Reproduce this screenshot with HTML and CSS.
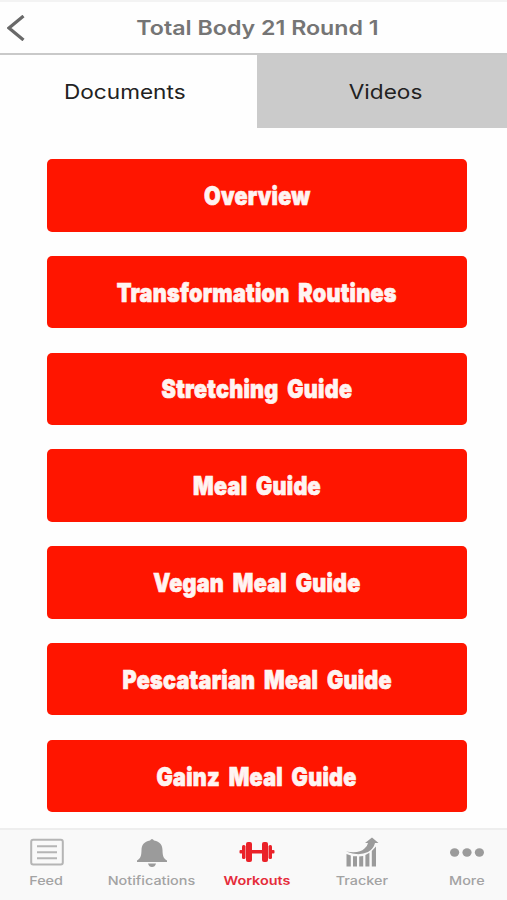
FILE: index.html
```html
<!DOCTYPE html>
<html lang="en">

<head>
    <meta charset="UTF-8">
    <meta name="viewport" content="width=device-width, initial-scale=1.0">
    <title>Total Body 21 Round 1</title>
    <link rel="stylesheet" href="styles.css">
</head>
<body>
    <!-- Header -->
    <header class="header">
        <a class="back" href="#" aria-label="Back">
            <svg width="18" height="26" viewBox="0 0 18 26"><path d="M16.500 1L2 13L16.500 25" /></svg>
        </a>
        <h1 class="title"><span>Total Body 21 Round 1</span></h1>
    </header>

    <!-- Tabs -->
    <div class="tabs">
        <a class="tab active" href="#"><span>Documents</span></a>
        <a class="tab" href="#"><span>Videos</span></a>
    </div>

    <!-- Documents -->
    <main class="documents">
        <a class="btn" href="#"><span>Overview</span></a>
        <a class="btn" href="#"><span>Transformation Routines</span></a>
        <a class="btn" href="#"><span>Stretching Guide</span></a>
        <a class="btn" href="#"><span>Meal Guide</span></a>
        <a class="btn" href="#"><span>Vegan Meal Guide</span></a>
        <a class="btn" href="#"><span>Pescatarian Meal Guide</span></a>
        <a class="btn" href="#"><span>Gainz Meal Guide</span></a>
    </main>

    <!-- Bottom Navigation -->
    <nav class="bottom-nav">
        <a class="nav-item" href="#">
            <svg width="36" height="32" viewBox="0 0 36 32">
                <rect class="line" x="2.200" y="3.800" width="31.600" height="24.600" rx="2" />
                <path class="line" d="M8 10.200h20M8 16.200h20M8 22.200h20" />
            </svg>
            <span>Feed</span>
        </a>
        <a class="nav-item" href="#">
            <svg width="36" height="32" viewBox="0 0 36 32">
                <path d="M16 4.500Q18 1.500 20 4.500C26 5.500 28.300 9 28.500 14C28.600 20 29.500 22.500 33 24.500V26H3V24.500C6.500 22.500 7.400 20 7.500 14C7.700 9 10 5.500 16 4.500Z" />
                <path d="M14 27.500h8Q21 31 18 31T14 27.500Z" />
            </svg>
            <span>Notifications</span>
        </a>
        <a class="nav-item active" href="#">
            <svg width="36" height="32" viewBox="0 0 36 32">
                <rect x="7" y="6" width="6" height="20" rx="2" />
                <rect x="23" y="6" width="6" height="20" rx="2" />
                <rect x="3" y="9" width="3.500" height="14" rx="1.500" />
                <rect x="29.500" y="9" width="3.500" height="14" rx="1.500" />
                <rect x="13" y="14" width="10" height="3.500" />
                <rect x="0.500" y="14" width="3" height="3.500" rx="1" />
                <rect x="32.500" y="14" width="3" height="3.500" rx="1" />
            </svg>
            <span>Workouts</span>
        </a>
        <a class="nav-item" href="#">
            <svg width="36" height="32" viewBox="0 0 36 32">
                <path d="M2.500 18L6.800 19.500V30.500H2.500ZM9 20.200H13V30.500H9ZM15.200 20.500L19.200 20V30.500H15.200ZM21.400 19L25.400 16.800V30.500H21.400ZM27.800 15L32 10.500V30.500H27.800Z" />
                <path d="M2 15.500Q15 18 20.500 12.500Q23.500 10 24 7H21L28 1.500L34.500 7H31Q29.500 13 24 16Q14.500 20.500 2 15.500Z" />
            </svg>
            <span>Tracker</span>
        </a>
        <a class="nav-item" href="#">
            <svg width="36" height="32" viewBox="0 0 36 32">
                <ellipse cx="5.600" cy="16.500" rx="4.600" ry="4.200" />
                <ellipse cx="18" cy="16.500" rx="4.600" ry="4.200" />
                <ellipse cx="30.400" cy="16.500" rx="4.600" ry="4.200" />
            </svg>
            <span>More</span>
        </a>
    </nav>
</body>
</html>
```

FILE: styles.css
```css
/* General Styles */
* {
    box-sizing: border-box;
}

body {
    font-family: Inter, "Liberation Sans", sans-serif;
    margin: 0;
    height: 900px;
    display: flex;
    flex-direction: column;
    background-color: #fefefe;
    overflow: hidden;
}

a {
    text-decoration: none;
}

span {
    display: inline-block;
    white-space: nowrap;
}

/* Header */
.header {
    height: 55px;
    flex: none;
    display: grid;
    grid-template-columns: 40px 1fr 32px;
    align-items: center;
    border-top: 2px solid #f3f3f3;
    border-bottom: 2px solid #c9c9c9;
}

.back {
    padding-left: 7px;
    height: 26px;
}

.back svg {
    display: block;
    fill: none;
    stroke: #696969;
    stroke-width: 3.2;
}

.title {
    margin: 0;
    font-size: 20px;
    font-weight: 600;
    text-align: center;
    color: #757575;
}

.title span {
    transform: scaleX(1.16);
}

/* Tabs */
.tabs {
    display: grid;
    grid-template-columns: 257px 1fr;
    height: 73px;
    flex: none;
}

.tab {
    display: flex;
    align-items: center;
    justify-content: center;
    font-size: 20px;
    color: #222;
    background-color: #cbcbcb;
    padding: 1px 0 0 8px;
}

.tab.active {
    background-color: #fefefe;
    padding: 1px 7px 0 0;
}

.tab span {
    transform: scaleX(1.13);
}

/* Document buttons */
.documents {
    flex: 1;
    display: flex;
    flex-direction: column;
    gap: 24.3px;
    padding: 31px 40px 0 47px;
}

.btn {
    height: 72.5px;
    flex: none;
    display: flex;
    align-items: center;
    justify-content: center;
    border-radius: 5px;
    background-color: #ff1500;
    color: #fff4f2;
    font-family: Impact, Inter, sans-serif;
    font-size: 26px;
    font-weight: 900;
    letter-spacing: 0.3px;
    word-spacing: 5px;
    -webkit-text-stroke: 0.7px #fff4f2;
}

.btn span {
    transform: scaleX(0.83);
}

/* Bottom Navigation */
.bottom-nav {
    height: 72px;
    flex: none;
    display: grid;
    grid-template-columns: repeat(5, 105px);
    justify-content: center;
    padding: 6px 0 0 6px;
    border-top: 2px solid #eee;
    background-color: #f9f9f9;
}

.nav-item {
    display: flex;
    flex-direction: column;
    align-items: center;
    gap: 5px;
    font-size: 12px;
    font-weight: 500;
    line-height: 15px;
    color: #a3a3a3;
}

.nav-item svg {
    fill: #9b9b9b;
}

.nav-item .line {
    fill: none;
    stroke: #b5b5b5;
    stroke-width: 2;
}

.nav-item span {
    transform: scaleX(1.2);
}

.nav-item.active {
    color: #e52c3a;
    font-weight: 600;
}

.nav-item.active svg {
    fill: #ea2229;
}
```
